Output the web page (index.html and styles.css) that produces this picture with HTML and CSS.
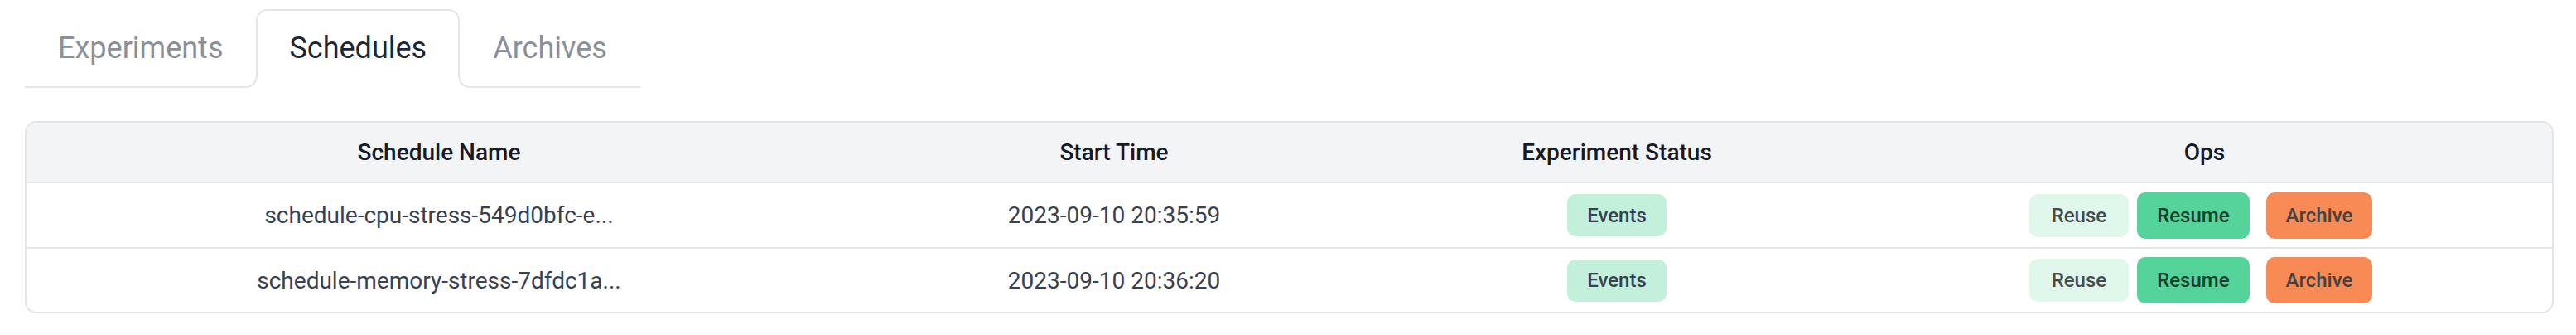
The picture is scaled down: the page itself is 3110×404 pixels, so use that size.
FILE: index.html
```html
<!DOCTYPE html>
<html lang="en">
<head>
<meta charset="utf-8">
<title>Schedules</title>
<link rel="stylesheet" href="styles.css">
</head>
<body>
<div class="page">
  <div class="tabs">
    <button class="tab">Experiments</button>
    <button class="tab active">Schedules</button>
    <button class="tab">Archives</button>
  </div>
  <div class="table-wrap">
    <table class="grid">
      <colgroup>
        <col class="c1"><col class="c2"><col class="c3"><col class="c4">
      </colgroup>
      <thead>
        <tr><th>Schedule Name</th><th>Start Time</th><th>Experiment Status</th><th>Ops</th></tr>
      </thead>
      <tbody>
        <tr>
          <td>schedule-cpu-stress-549d0bfc-e...</td>
          <td>2023-09-10 20:35:59</td>
          <td><div class="cell-center"><button class="btn btn-events">Events</button></div></td>
          <td><div class="ops"><button class="btn btn-reuse">Reuse</button><button class="btn btn-resume">Resume</button><button class="btn btn-archive">Archive</button></div></td>
        </tr>
        <tr>
          <td>schedule-memory-stress-7dfdc1a...</td>
          <td>2023-09-10 20:36:20</td>
          <td><div class="cell-center"><button class="btn btn-events">Events</button></div></td>
          <td><div class="ops"><button class="btn btn-reuse">Reuse</button><button class="btn btn-resume">Resume</button><button class="btn btn-archive">Archive</button></div></td>
        </tr>
      </tbody>
    </table>
  </div>
</div>
</body>
</html>
```
FILE: styles.css
```css
* { box-sizing: border-box; }
body {
  margin: 0;
  background: #ffffff;
  font-family: Roboto, "Liberation Sans", sans-serif;
}
.page {
  padding: 11px 27px 0 30px;
}
.tabs {
  display: flex;
  width: fit-content;
  border-bottom: 2px solid #e3e5e9;
}
.tab {
  font-family: Roboto, "Liberation Sans", sans-serif;
  font-size: 36px;
  font-weight: 400;
  line-height: 54px;
  color: #8a9099;
  background: transparent;
  border: 2px solid transparent;
  border-bottom: 0;
  border-radius: 14px 14px 0 0;
  padding: 18px 38px 19px;
  margin: 0;
  cursor: pointer;
}
.tab.active {
  position: relative;
  color: #1e2533;
  background: #ffffff;
  border-color: #e3e5e9;
  margin-bottom: -2px;
  padding-bottom: 21px;
}
.tab.active::before,
.tab.active::after {
  content: "";
  position: absolute;
  bottom: 0;
  width: 14px;
  height: 14px;
}
.tab.active::before {
  right: 100%;
  background: radial-gradient(circle at 0 0, #ffffff 11.5px, #e3e5e9 12px, #e3e5e9 13.5px, #ffffff 14px);
}
.tab.active::after {
  left: 100%;
  background: radial-gradient(circle at 100% 0, #ffffff 11.5px, #e3e5e9 12px, #e3e5e9 13.5px, #ffffff 14px);
}
.table-wrap {
  margin-top: 40px;
  border: 2px solid #e4e5e9;
  border-radius: 14px;
  overflow: hidden;
}
.grid {
  width: 100%;
  border-collapse: separate;
  border-spacing: 0;
  table-layout: fixed;
}
.c1 { width: 996px; }
.c2 { width: 634px; }
.c3 { width: 580px; }
.c4 { width: 839px; }
.grid th {
  height: 73px;
  padding: 0;
  background: #f3f4f6;
  border-bottom: 2px solid #e4e5e9;
  font-size: 28px;
  font-weight: 500;
  color: #141a26;
  text-align: center;
  vertical-align: middle;
}
.grid td {
  height: 79px;
  padding: 0;
  border-bottom: 2px solid #e4e5e9;
  font-size: 28px;
  font-weight: 400;
  color: #374151;
  text-align: center;
  vertical-align: middle;
}
.grid tbody tr:last-child td {
  height: 76px;
  border-bottom: 0;
}
.cell-center {
  display: flex;
  justify-content: center;
  align-items: center;
}
.ops {
  display: flex;
  justify-content: center;
  align-items: center;
}
.btn {
  display: inline-flex;
  align-items: center;
  justify-content: center;
  font-family: Roboto, "Liberation Sans", sans-serif;
  font-size: 24px;
  font-weight: 500;
  line-height: 1;
  border: 0;
  border-radius: 10px;
  padding: 0 24px;
  height: 56px;
  margin: 0;
  cursor: pointer;
}
.btn-events {
  height: 51px;
  background: #c3f0da;
  color: #364152;
}
.btn-reuse {
  height: 52px;
  padding: 0 27px;
  background: #e0f7ec;
  color: #4a4a4a;
  margin-right: 10px;
}
.btn-resume {
  background: #54d49b;
  color: #173f2b;
}
.btn-archive {
  background: #f88b55;
  color: #404449;
  margin-left: 20px;
  margin-right: 9px;
}
```
